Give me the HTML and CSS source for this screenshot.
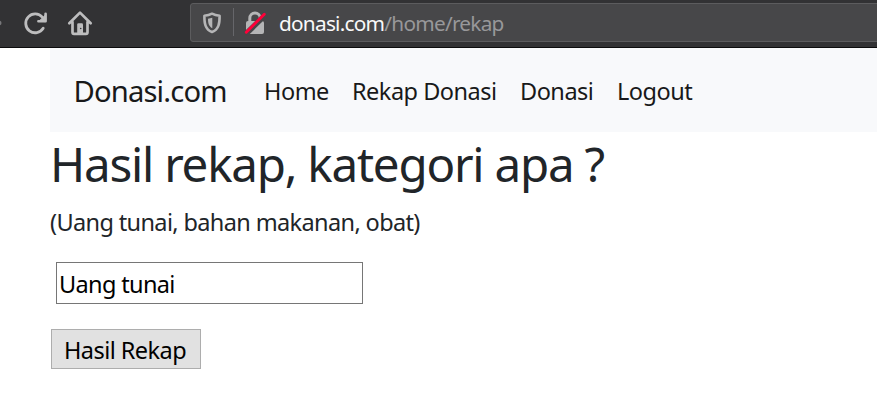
FILE: index.html
```
<!DOCTYPE html>
<html lang="id">
<head>
<meta charset="utf-8">
<title>Rekap Donasi</title>
<link rel="stylesheet" href="styles.css">
</head>
<body>
<header class="toolbar">
  <svg class="toolbar-icons" width="100" height="47" viewBox="0 0 100 47" fill="none" stroke="#bdbdbe" stroke-linecap="round" stroke-linejoin="round">
    <circle cx="-1" cy="23" r="2.5" fill="#77777a" stroke="none"/>
    <path d="M43.2 28.2A9.4 9.4 0 1 1 42.3 17.2" stroke-width="2.8"/>
    <path d="M45.6 13.8V21.3H38.4" stroke-width="2.6"/>
    <path d="M39.5 20.8L45.4 15V21.3Z" fill="#bdbdbe" stroke-width="1"/>
    <path d="M69.3 23.2L80 12.6L90.7 23.2M72.5 22V32.3Q72.5 33.8 74 33.8H86Q87.500 33.8 87.500 32.300V22" stroke-width="2.7"/>
    <path d="M77.200 34V24.500Q77.200 23.200 78.500 23.200H81.700Q83 23.200 83 24.500V34Z" fill="#bdbdbe" stroke="none"/>
    <circle cx="80.700" cy="28.500" r=".8" fill="#38383d" stroke="none"/>
  </svg>
  <div class="urlbar">
    <svg width="88" height="38" viewBox="191 4 88 38" fill="none">
      <path d="M212 13.700C209 15.200 207 15.500 204.400 15.800C204.300 23 205 29.500 212 32C219 29.500 219.700 23 219.600 15.800C217 15.500 215 15.200 212 13.700Z" stroke="#b5b5b6" stroke-width="2.600" stroke-linejoin="round"/>
      <path d="M212.300 17.700V28.300C208.800 26.300 208 23 208 18.700Q210.500 18.300 212.300 17.700Z" fill="#b5b5b6"/>
      <path d="M233.500 8V36" stroke="#66666a"/>
      <path d="M249.800 22V18.300A5.200 5.200 0 0 1 260.200 18.300V22" stroke="#b5b5b6" stroke-width="3"/>
      <rect x="246" y="21" width="18" height="13" rx="2" fill="#b5b5b6"/>
      <path d="M245.800 34L266 14.300" stroke="#474749" stroke-width="5.500"/>
      <path d="M246.300 32.200L264.300 14.200" stroke="#ff0039" stroke-width="2.900" stroke-linecap="round"/>
    </svg>
    <span class="url"><span class="host">donasi.com</span><span class="path">/home/rekap</span></span>
  </div>
</header>
<div class="page">
  <nav class="navbar">
    <a class="brand">Donasi.com</a>
    <a class="link home">Home</a>
    <a class="link recap">Rekap Donasi</a>
    <a class="link donate">Donasi</a>
    <a class="link logout">Logout</a>
  </nav>
  <h1>Hasil rekap, kategori apa ?</h1>
  <p>(Uang tunai, bahan makanan, obat)</p>
  <form>
    <input type="text" value="Uang tunai">
    <button type="button">Hasil Rekap</button>
  </form>
</div>
</body>
</html>
```
FILE: styles.css
```
* { box-sizing: border-box; }
body { margin: 0; width: 877px; height: 410px; overflow: hidden; background: #fff; color: #212529; font: 23.5px/36px "Noto Sans", "Open Sans", sans-serif; }
.toolbar { height: 48px; display: flex; background: #323234; border-bottom: 1px solid #0c0c0d; }
.toolbar-icons { flex: none; }
.urlbar { display: flex; flex: 1; height: 39px; margin: 3px -5px 0 90px; border: 1px solid #5c5c5e; border-radius: 3px; background: #474749; }
.urlbar svg { flex: none; }
.url { font-size: 20.8px; line-height: 38px; letter-spacing: -.75px; white-space: nowrap; }
.host { color: #f9f9fa; }
.path { color: #98989a; }
.page { margin-left: 50px; }
.navbar { height: 84px; display: flex; align-items: center; padding: 1px 24px 0; background: #f8f9fb; color: #18191a; white-space: nowrap; }
.brand { width: 190px; margin-left: -.5px; margin-right: .5px; font-size: 29.2px; letter-spacing: -.85px; }
.link { letter-spacing: -.5px; }
.home { width: 88px; }
.recap { width: 168px; }
.donate { width: 97px; }
h1 { margin: 0; height: 72px; font-size: 47.5px; font-weight: 400; line-height: 64px; letter-spacing: -1.22px; white-space: nowrap; }
p { margin: 0; height: 58px; letter-spacing: -.63px; }
form { display: flex; flex-direction: column; align-items: flex-start; }
input { width: 307px; height: 42px; margin: 0 0 25px 6px; padding: 1px 2px 0; border: 1px solid #767676; background: #fff; color: #000; font: inherit; letter-spacing: -.65px; }
button { width: 150px; height: 40px; margin-left: 1px; padding: 3px 0 0 12px; border: 1px solid #adadad; background: #e1e1e1; color: #000; font: inherit; line-height: 35px; text-align: left; letter-spacing: -.55px; white-space: nowrap; }
```
